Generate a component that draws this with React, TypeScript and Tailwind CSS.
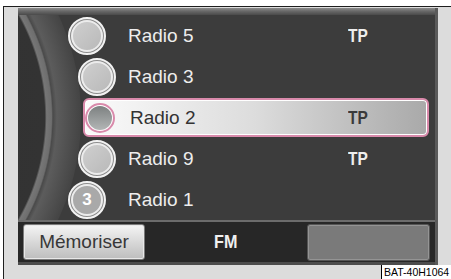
import React from "react";

type Row = { name: string; tp: boolean; pl: string; num?: string };

function Circle({ num }: { num?: string }) {
  return (
    <div className="w-[38px] h-[38px] rounded-full border-2 border-[#f2f2f2] bg-[#8c8c8c] p-[1px] shrink-0">
      <div
        className={
          "w-full h-full rounded-full border-2 border-[#ececec] flex items-center justify-center " +
          (num ? "bg-[#a9a9a9]" : "bg-gradient-to-br from-[#cfcfcf] to-[#b9b9b9]")
        }
      >
        {num ? <span className="text-[17px] font-bold text-white leading-none">{num}</span> : null}
      </div>
    </div>
  );
}

function NormalRow({ r }: { r: Row }) {
  return (
    <div className="h-[41px] flex items-center">
      <div className={"w-[110px] shrink-0 flex " + r.pl}>
        <Circle num={r.num} />
      </div>
      <div className="w-[220px] shrink-0 text-[19px] text-[#ededed] leading-none">{r.name}</div>
      <div className="text-[18px] font-bold text-[#eeeeee] leading-none inline-block scale-x-[0.86] origin-left">
        {r.tp ? "TP" : ""}
      </div>
    </div>
  );
}

function SelectedRow() {
  return (
    <div className="h-[41px] flex items-center">
      <div className="ml-[65px] w-[346px] h-[39px] rounded-[6px] border-2 border-[#d98aab] shadow-[inset_0_0_0_1px_#ffffff] bg-gradient-to-r from-[#fbfbfb] via-[#dcdcdc] to-[#a9a9a9] flex items-center">
        <div className="w-[30px] h-[30px] rounded-full border-2 border-[#d98aab] bg-white p-[1px] shrink-0">
          <div className="w-full h-full rounded-full bg-gradient-to-b from-[#7d8181] to-[#b3b6b6]" />
        </div>
        <div className="ml-[15px] w-[218px] shrink-0 text-[19px] text-[#333333] leading-none">Radio 2</div>
        <div className="text-[18px] font-bold text-[#3a3a3a] leading-none inline-block scale-x-[0.86] origin-left">TP</div>
      </div>
    </div>
  );
}

export default function App() {
  const rows: Row[] = [
    { name: "Radio 5", tp: true, pl: "pl-[50px]" },
    { name: "Radio 3", tp: false, pl: "pl-[60px]" },
    { name: "Radio 2", tp: true, pl: "pl-[60px]" },
    { name: "Radio 9", tp: true, pl: "pl-[60px]" },
    { name: "Radio 1", tp: false, pl: "pl-[50px]", num: "3" },
  ];
  return (
    <div className="relative w-[451px] h-[279px] bg-white overflow-hidden font-['Liberation_Sans',Arial,sans-serif]">
      <div className="pt-[6px] pl-[3px]">
        <div className="h-[273px] border-l border-t border-[#1e1e1e] bg-[#dcdcdc] pl-[14px] pt-[1px]">
          <div className="w-[420px] h-[257px] bg-[#3c3c3c] flex flex-col border-r-[3px] border-[#5a5a5a]">
            <div className="h-[7px] bg-gradient-to-b from-[#8c8c8c] via-[#666666] to-[#4a4a4a]" />
            <div className="relative h-[205px]">
              <svg className="absolute left-0 top-0" width="120" height="205" viewBox="18 15 120 205">
                <defs>
                  <radialGradient id="band" gradientUnits="userSpaceOnUse" cx="-161" cy="117" r="242">
                    <stop offset="0" stopColor="#2f2f2f" />
                    <stop offset="0.85" stopColor="#333333" />
                    <stop offset="0.858" stopColor="#767676" />
                    <stop offset="0.878" stopColor="#6e6e6e" />
                    <stop offset="0.884" stopColor="#4a4a4a" />
                    <stop offset="0.9" stopColor="#5c5c5c" />
                    <stop offset="1" stopColor="#444444" />
                  </radialGradient>
                </defs>
                <circle cx="-161" cy="117" r="242" fill="url(#band)" />
              </svg>
              <div className="relative flex flex-col">
                <NormalRow r={rows[0]} />
                <NormalRow r={rows[1]} />
                <SelectedRow />
                <NormalRow r={rows[3]} />
                <NormalRow r={rows[4]} />
              </div>
            </div>
            <div className="h-[2px] bg-[#6c6c6c]" />
            <div className="h-[40px] bg-[#272727] flex items-center pl-[5px]">
              <div className="w-[122px] h-[36px] rounded-[3px] border border-[#7a7a7a] bg-gradient-to-b from-[#f5f5f5] to-[#bdbdbd] shadow-[inset_0_0_0_1px_#e8e8e8] flex items-center justify-center text-[19px] text-[#383838]">
                Mémoriser
              </div>
              <div className="w-[162px] flex items-center justify-center">
                <span className="text-[19px] font-bold text-[#f0f0f0] inline-block scale-x-[0.85]">FM</span>
              </div>
              <div className="w-[123px] h-[37px] rounded-[3px] border border-[#555555] bg-[#7a7a7a] shadow-[inset_0_0_0_1px_#949494]" />
            </div>
            <div className="h-[3px] bg-[#4c4c4c]" />
          </div>
        </div>
      </div>
      <div className="absolute right-0 bottom-0 w-[70px] h-[14px] bg-white border-l border-black text-[10.5px] leading-[14px] pl-[2px] text-black">
        BAT-40H1064
      </div>
    </div>
  );
}
